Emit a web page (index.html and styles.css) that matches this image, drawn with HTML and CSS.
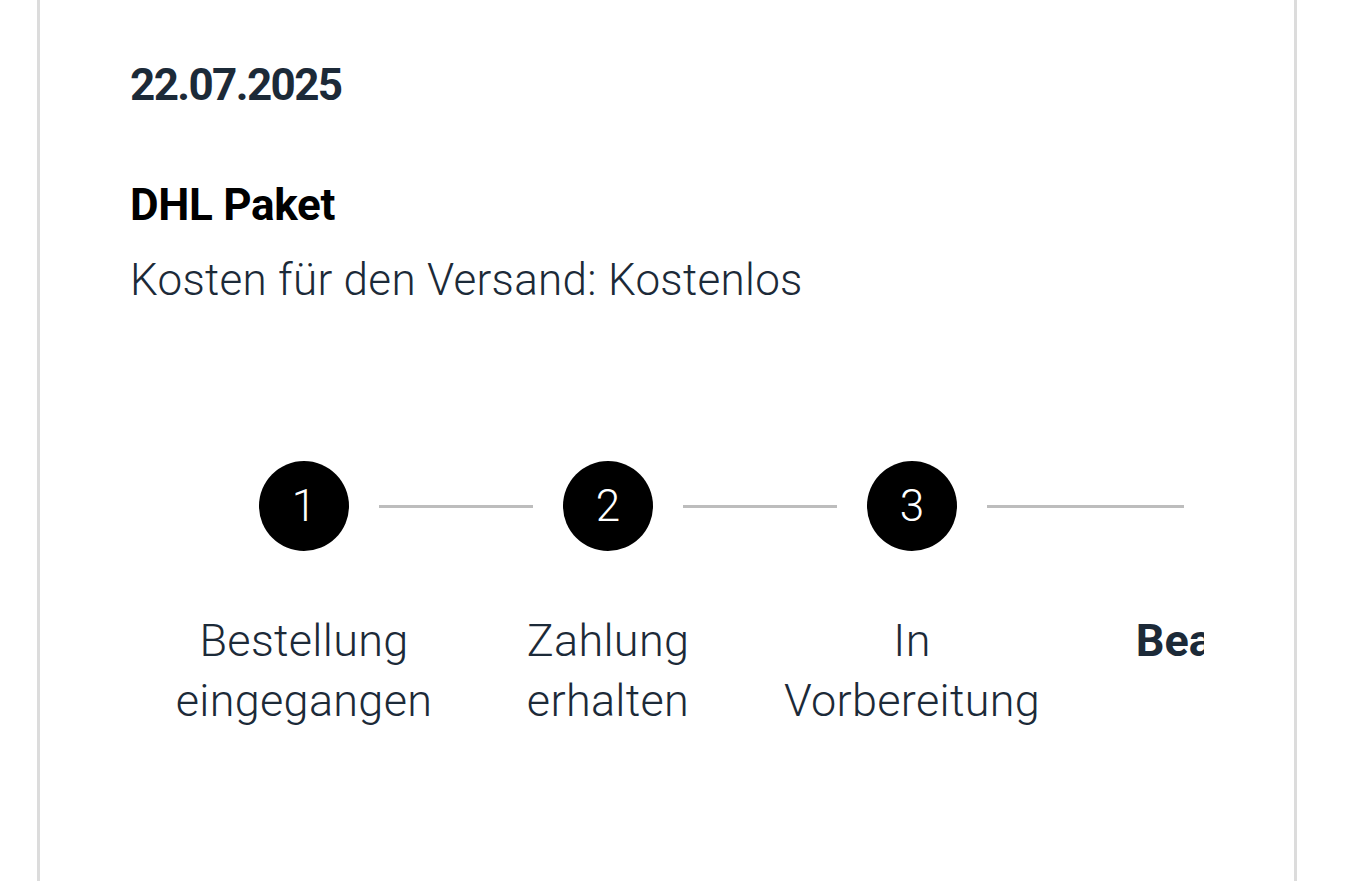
FILE: index.html
```html
<!DOCTYPE html>
<html lang="de">
<head>
<meta charset="utf-8">
<title>Bestellung</title>
<link rel="stylesheet" href="styles.css">
</head>
<body>
<main class="card">
  <div class="order-date">22.07.2025</div>
  <div class="carrier">DHL Paket</div>
  <div class="shipping-cost">Kosten für den Versand: Kostenlos</div>

  <div class="stepper">
    <div class="step">
      <div class="track">
        <span class="seg seg-left seg-none"></span>
        <span class="circle">1</span>
        <span class="seg seg-right"></span>
      </div>
      <div class="label">Bestellung<br>eingegangen</div>
    </div>
    <div class="step">
      <div class="track">
        <span class="seg seg-left"></span>
        <span class="circle">2</span>
        <span class="seg seg-right"></span>
      </div>
      <div class="label">Zahlung<br>erhalten</div>
    </div>
    <div class="step">
      <div class="track">
        <span class="seg seg-left"></span>
        <span class="circle">3</span>
        <span class="seg seg-right"></span>
      </div>
      <div class="label">In<br>Vorbereitung</div>
    </div>
    <div class="step step-wide">
      <div class="track">
        <span class="seg seg-left"></span>
        <span class="circle circle-current">4</span>
        <span class="seg seg-right seg-none"></span>
      </div>
      <div class="label label-current">Bearbeitung</div>
    </div>
  </div>
</main>
</body>
</html>
```

FILE: styles.css
```css
html, body {
  margin: 0;
  padding: 0;
  background: #ffffff;
}

body {
  font-family: Roboto, "Noto Sans", Arial, sans-serif;
  color: #1c2a38;
}

.card {
  box-sizing: border-box;
  margin-left: 37px;
  width: 1260px;
  height: 881px;
  border-left: 3px solid #dcdcdc;
  border-right: 3px solid #dcdcdc;
  padding: 59px 90px 0 90px;
  overflow: hidden;
}

.order-date {
  font-size: 44px;
  line-height: 52px;
  font-weight: 700;
  letter-spacing: -1.6px;
  color: #1c2a38;
}

.carrier {
  margin-top: 68px;
  font-size: 44px;
  line-height: 52px;
  font-weight: 700;
  letter-spacing: -0.3px;
  color: #000000;
}

.shipping-cost {
  margin-top: 21px;
  font-size: 44px;
  line-height: 56px;
  font-weight: 350;
  letter-spacing: 0.3px;
  color: #1c2a38;
}

.stepper {
  margin-top: 153px;
  padding-left: 22px;
  display: flex;
  overflow: hidden;
}

.step {
  flex: 0 0 304px;
  display: flex;
  flex-direction: column;
  align-items: center;
}

.step-wide {
  flex: 0 0 390px;
}

.track {
  display: flex;
  align-items: center;
  width: 100%;
  height: 90px;
}

.seg {
  flex: 1;
  height: 3px;
  background: #bdbdbd;
}

.seg-left {
  margin-right: 30px;
}

.seg-right {
  margin-left: 30px;
}

.seg-none {
  background: transparent;
}

.circle {
  flex: 0 0 90px;
  width: 90px;
  height: 90px;
  border-radius: 50%;
  background: #000000;
  color: #ffffff;
  font-size: 44px;
  font-weight: 300;
  line-height: 90px;
  text-align: center;
}

.circle-current {
  background: #ffffff;
  color: #000000;
  border: 3px solid #000000;
  box-sizing: border-box;
  line-height: 84px;
}

.label {
  margin-top: 60px;
  font-size: 45px;
  line-height: 60px;
  font-weight: 350;
  letter-spacing: 0.3px;
  text-align: center;
  color: #1c2a38;
  white-space: nowrap;
}

.label-current {
  font-weight: 700;
  letter-spacing: 0;
}
```
